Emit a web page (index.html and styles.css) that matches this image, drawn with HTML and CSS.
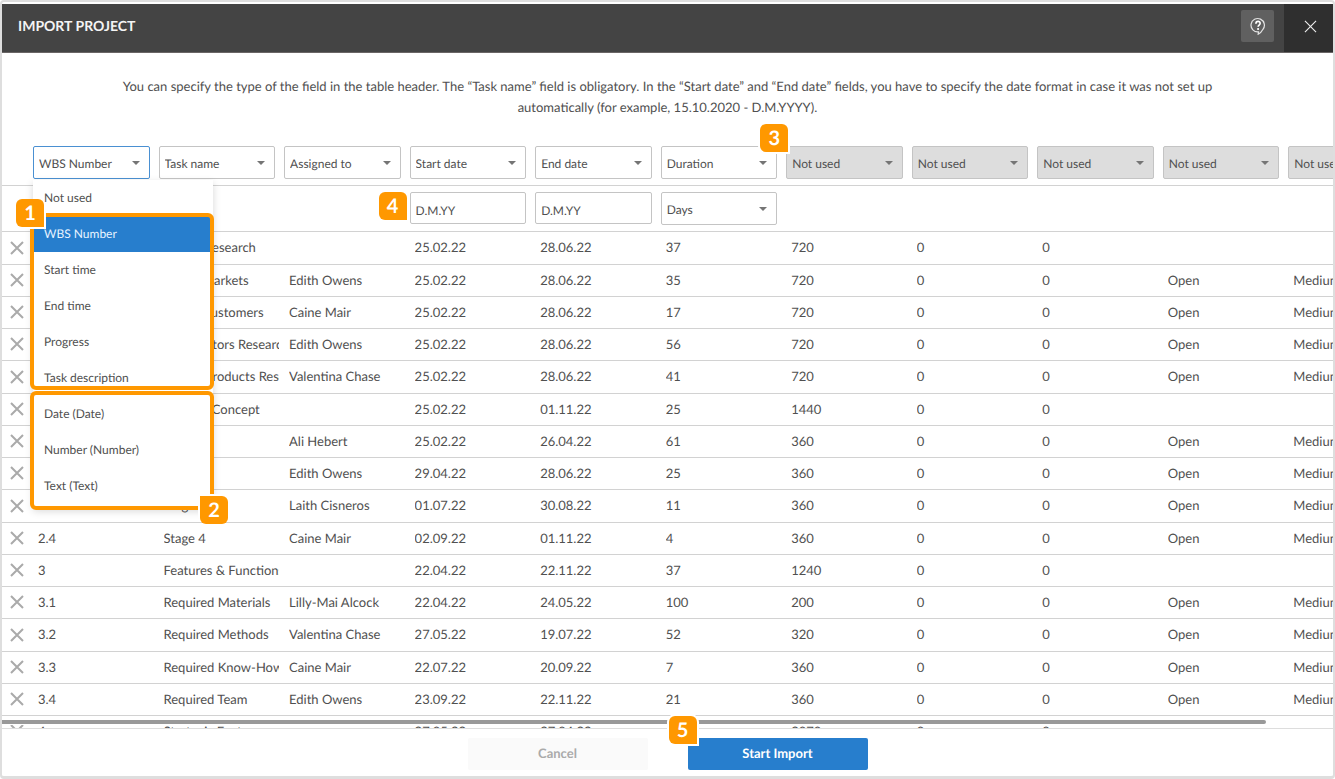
FILE: index.html
```
<!DOCTYPE html>
<html lang="en">
<head>
<meta charset="utf-8">
<title>Import project</title>
<link rel="stylesheet" href="styles.css">
</head>
<body>
<svg class="sprite" aria-hidden="true"><symbol id="cross" viewBox="0 0 14 14"><path d="M1 1 13 13M13 1 1 13"/></symbol></svg>
<main class="dialog">
<header class="topbar">
<h1 class="title">IMPORT PROJECT</h1>
<button class="help" type="button" aria-label="Help"><svg width="18" height="18" viewBox="0 0 18 18"><path d="M9.500 14.900A6.700 6.700 0 1 1 13.800 12.600C12.800 14.600 11.500 16.200 9.200 17.200Z" fill="none" stroke="#e2e2e2" stroke-width="1.2"/><path d="M6.900 6.700C7 3.700 11.300 3.800 11.100 6.500C11 8.100 9.100 8.100 9.100 9.800" fill="none" stroke="#fff" stroke-width="1.700"/><circle cx="9.100" cy="12" r="1.100" fill="#fff"/></svg></button>
<button class="close" type="button" aria-label="Close"><svg width="13" height="13"><use href="#cross"/></svg></button>
</header>
<p class="intro">You can specify the type of the field in the table header. The “Task name” field is obligatory. In the “Start date” and “End date” fields, you have to specify the date format in case it was not set up automatically (for example, 15.10.2020 - D.M.YYYY).</p>
<section class="preview">
<div class="scroller">
<table class="grid">
<colgroup><col class="col-remove"><col><col><col><col><col><col><col><col><col><col><col></colgroup>
<thead>
<tr>
<td></td>
<th><div class="field field-open"><select class="control" aria-label="Column 1"><option>WBS Number</option></select>
<div class="menu">
<ul class="options" role="listbox" aria-label="Field type">
<li class="option" role="option">Not used</li>
<li class="option option-active" role="option" aria-selected="true">WBS Number</li>
<li class="option" role="option">Start time</li>
<li class="option" role="option">End time</li>
<li class="option" role="option">Progress</li>
<li class="option" role="option">Task description</li>
<li class="option" role="option">Date (Date)</li>
<li class="option" role="option">Number (Number)</li>
<li class="option" role="option">Text (Text)</li>
</ul>
<div class="frame frame-standard"><span class="badge badge-1">1</span></div>
<div class="frame frame-custom"><span class="badge badge-2">2</span></div>
</div></div></th>
<th><div class="field"><select class="control" aria-label="Column 2"><option>Task name</option></select></div></th>
<th><div class="field"><select class="control" aria-label="Column 3"><option>Assigned to</option></select></div></th>
<th><div class="field"><select class="control" aria-label="Column 4"><option>Start date</option></select></div></th>
<th><div class="field"><select class="control" aria-label="Column 5"><option>End date</option></select></div></th>
<th><div class="field field-marked"><select class="control" aria-label="Column 6"><option>Duration</option></select><span class="badge badge-3">3</span></div></th>
<th><div class="field"><select class="control control-unused" aria-label="Column 7"><option>Not used</option></select></div></th>
<th><div class="field"><select class="control control-unused" aria-label="Column 8"><option>Not used</option></select></div></th>
<th><div class="field"><select class="control control-unused" aria-label="Column 9"><option>Not used</option></select></div></th>
<th><div class="field"><select class="control control-unused" aria-label="Column 10"><option>Not used</option></select></div></th>
<th><div class="field"><select class="control control-unused" aria-label="Column 11"><option>Not used</option></select></div></th>
</tr>
<tr>
<td></td><td></td><td></td><td></td>
<td><div class="format"><input class="control control-text" type="text" value="D.M.YY" aria-label="Start date format"><span class="badge badge-4">4</span></div></td>
<td><div class="format"><input class="control control-text" type="text" value="D.M.YY" aria-label="End date format"></div></td>
<td><div class="field"><select class="control" aria-label="Duration unit"><option>Days</option></select></div></td>
<td></td><td></td><td></td><td></td><td></td>
</tr>
</thead>
<tbody>
<tr><td><button class="remove" type="button" aria-label="Remove row"><svg width="14" height="14"><use href="#cross"/></svg></button></td><td></td><td><div>Market research</div></td><td></td><td><div>25.02.22</div></td><td><div>28.06.22</div></td><td><div>37</div></td><td><div>720</div></td><td><div>0</div></td><td><div>0</div></td><td></td><td></td></tr>
<tr><td><button class="remove" type="button" aria-label="Remove row"><svg width="14" height="14"><use href="#cross"/></svg></button></td><td></td><td><div>Target Markets</div></td><td><div>Edith Owens</div></td><td><div>25.02.22</div></td><td><div>28.06.22</div></td><td><div>35</div></td><td><div>720</div></td><td><div>0</div></td><td><div>0</div></td><td><div>Open</div></td><td><div>Medium</div></td></tr>
<tr><td><button class="remove" type="button" aria-label="Remove row"><svg width="14" height="14"><use href="#cross"/></svg></button></td><td></td><td><div>Target Customers</div></td><td><div>Caine Mair</div></td><td><div>25.02.22</div></td><td><div>28.06.22</div></td><td><div>17</div></td><td><div>720</div></td><td><div>0</div></td><td><div>0</div></td><td><div>Open</div></td><td><div>Medium</div></td></tr>
<tr><td><button class="remove" type="button" aria-label="Remove row"><svg width="14" height="14"><use href="#cross"/></svg></button></td><td></td><td><div>Competitors Research</div></td><td><div>Edith Owens</div></td><td><div>25.02.22</div></td><td><div>28.06.22</div></td><td><div>56</div></td><td><div>720</div></td><td><div>0</div></td><td><div>0</div></td><td><div>Open</div></td><td><div>Medium</div></td></tr>
<tr><td><button class="remove" type="button" aria-label="Remove row"><svg width="14" height="14"><use href="#cross"/></svg></button></td><td></td><td><div>Similar Products Research</div></td><td><div>Valentina Chase</div></td><td><div>25.02.22</div></td><td><div>28.06.22</div></td><td><div>41</div></td><td><div>720</div></td><td><div>0</div></td><td><div>0</div></td><td><div>Open</div></td><td><div>Medium</div></td></tr>
<tr><td><button class="remove" type="button" aria-label="Remove row"><svg width="14" height="14"><use href="#cross"/></svg></button></td><td></td><td><div>Product Concept</div></td><td></td><td><div>25.02.22</div></td><td><div>01.11.22</div></td><td><div>25</div></td><td><div>1440</div></td><td><div>0</div></td><td><div>0</div></td><td></td><td></td></tr>
<tr><td><button class="remove" type="button" aria-label="Remove row"><svg width="14" height="14"><use href="#cross"/></svg></button></td><td></td><td></td><td><div>Ali Hebert</div></td><td><div>25.02.22</div></td><td><div>26.04.22</div></td><td><div>61</div></td><td><div>360</div></td><td><div>0</div></td><td><div>0</div></td><td><div>Open</div></td><td><div>Medium</div></td></tr>
<tr><td><button class="remove" type="button" aria-label="Remove row"><svg width="14" height="14"><use href="#cross"/></svg></button></td><td></td><td></td><td><div>Edith Owens</div></td><td><div>29.04.22</div></td><td><div>28.06.22</div></td><td><div>25</div></td><td><div>360</div></td><td><div>0</div></td><td><div>0</div></td><td><div>Open</div></td><td><div>Medium</div></td></tr>
<tr><td><button class="remove" type="button" aria-label="Remove row"><svg width="14" height="14"><use href="#cross"/></svg></button></td><td></td><td><div>Stage 3</div></td><td><div>Laith Cisneros</div></td><td><div>01.07.22</div></td><td><div>30.08.22</div></td><td><div>11</div></td><td><div>360</div></td><td><div>0</div></td><td><div>0</div></td><td><div>Open</div></td><td><div>Medium</div></td></tr>
<tr><td><button class="remove" type="button" aria-label="Remove row"><svg width="14" height="14"><use href="#cross"/></svg></button></td><td><div>2.4</div></td><td><div>Stage 4</div></td><td><div>Caine Mair</div></td><td><div>02.09.22</div></td><td><div>01.11.22</div></td><td><div>4</div></td><td><div>360</div></td><td><div>0</div></td><td><div>0</div></td><td><div>Open</div></td><td><div>Medium</div></td></tr>
<tr><td><button class="remove" type="button" aria-label="Remove row"><svg width="14" height="14"><use href="#cross"/></svg></button></td><td><div>3</div></td><td><div>Features &amp; Functions</div></td><td></td><td><div>22.04.22</div></td><td><div>22.11.22</div></td><td><div>37</div></td><td><div>1240</div></td><td><div>0</div></td><td><div>0</div></td><td></td><td></td></tr>
<tr><td><button class="remove" type="button" aria-label="Remove row"><svg width="14" height="14"><use href="#cross"/></svg></button></td><td><div>3.1</div></td><td><div>Required Materials</div></td><td><div>Lilly-Mai Alcock</div></td><td><div>22.04.22</div></td><td><div>24.05.22</div></td><td><div>100</div></td><td><div>200</div></td><td><div>0</div></td><td><div>0</div></td><td><div>Open</div></td><td><div>Medium</div></td></tr>
<tr><td><button class="remove" type="button" aria-label="Remove row"><svg width="14" height="14"><use href="#cross"/></svg></button></td><td><div>3.2</div></td><td><div>Required Methods</div></td><td><div>Valentina Chase</div></td><td><div>27.05.22</div></td><td><div>19.07.22</div></td><td><div>52</div></td><td><div>320</div></td><td><div>0</div></td><td><div>0</div></td><td><div>Open</div></td><td><div>Medium</div></td></tr>
<tr><td><button class="remove" type="button" aria-label="Remove row"><svg width="14" height="14"><use href="#cross"/></svg></button></td><td><div>3.3</div></td><td><div>Required Know-How</div></td><td><div>Caine Mair</div></td><td><div>22.07.22</div></td><td><div>20.09.22</div></td><td><div>7</div></td><td><div>360</div></td><td><div>0</div></td><td><div>0</div></td><td><div>Open</div></td><td><div>Medium</div></td></tr>
<tr><td><button class="remove" type="button" aria-label="Remove row"><svg width="14" height="14"><use href="#cross"/></svg></button></td><td><div>3.4</div></td><td><div>Required Team</div></td><td><div>Edith Owens</div></td><td><div>23.09.22</div></td><td><div>22.11.22</div></td><td><div>21</div></td><td><div>360</div></td><td><div>0</div></td><td><div>0</div></td><td><div>Open</div></td><td><div>Medium</div></td></tr>
<tr><td><button class="remove" type="button" aria-label="Remove row"><svg width="14" height="14"><use href="#cross"/></svg></button></td><td><div>4</div></td><td><div>Strategic Feat</div></td><td></td><td><div>27.05.22</div></td><td><div>27.04.23</div></td><td></td><td><div>2070</div></td><td><div>0</div></td><td><div>0</div></td><td></td><td></td></tr>
</tbody>
</table>
</div>
<div class="track"><div class="thumb"></div></div>
</section>
<footer class="actions">
<button class="action action-cancel" type="button">Cancel</button>
<div class="submit"><button class="action action-start" type="button">Start Import</button><span class="badge badge-5">5</span></div>
</footer>
</main>
</body>
</html>
```
FILE: styles.css
```
* { box-sizing: border-box; }
body { margin: 0; background: #fff; color: #505050; font-family: Lato, "Liberation Sans", sans-serif; font-size: 13px; line-height: 21px; text-rendering: geometricPrecision; }
button, input, select { font: inherit; color: inherit; margin: 0; text-rendering: inherit; }
button { border: 0; padding: 0; display: flex; align-items: center; justify-content: center; }
.sprite { display: none; }
svg { display: block; }

.dialog { display: flex; flex-direction: column; height: 100vh; border: 2px solid #dedede; border-bottom-width: 3px; border-radius: 4px; padding-top: 2px; overflow: hidden; }

.topbar { display: flex; flex: none; align-items: center; height: 49px; background: #444; border-bottom: 1px solid #6a6666; }
.title { flex: 1; margin: 0; padding: 0 16px 6px; color: #f4f4f4; font-size: 14px; font-weight: 700; }
.help { width: 33px; height: 32px; margin: 0 10px 4px 0; border-radius: 2px; background: #606060; }
.close { width: 49px; height: 48px; padding: 0 0 4px 4px; background: #2f2f2f; stroke: #eee; stroke-width: 1.2; }

.intro { flex: none; width: 83%; margin: 0 auto; padding-top: 23px; text-align: center; }

.preview { position: relative; flex: 1; min-height: 0; border-bottom: 1px solid #ddd; }
.scroller { height: 100%; overflow: hidden; padding-top: 28px; }
.grid { width: 1412px; table-layout: fixed; border-collapse: separate; border-spacing: 0; }
.col-remove { width: 31px; }
.grid td, .grid th { padding: 0; border-bottom: 1px solid #d2d2d2; font-weight: 400; text-align: left; }
.grid thead td, .grid thead th { padding: 0 9px 6px 0; vertical-align: top; }
.grid thead tr + tr td { padding-top: 6px; }
.grid tbody tr { height: 32px; }
.grid tbody tr:nth-child(4n+1) { height: 33px; }
.grid tbody td { padding-bottom: 1px; }
.grid tbody div { margin: 0 5px; overflow: hidden; white-space: nowrap; }
.remove { width: 30px; height: 21px; background: none; stroke: #aaa; stroke-width: 2; }

.field, .format { position: relative; height: 33px; font-size: 12px; }
.field::after { content: ""; position: absolute; right: 10px; top: 15px; border: 4px solid transparent; border-top-color: #757575; border-bottom: 0; pointer-events: none; }
.field-open { z-index: 2; }
.field-marked { z-index: 1; }
.control { display: block; width: 100%; height: 33px; padding: 2px 20px 0 5px; border: 1px solid #c4c4c4; border-radius: 2px; background: #fff; appearance: none; outline: 0; }
.control-text { height: 32px; padding-top: 5px; }
.control-unused { background: #ddd; }
.field-open .control { border-color: #4a90d2; }

.menu { position: absolute; left: 0; top: 34px; width: 180px; background: #fff; box-shadow: 0 3px 8px rgba(0, 0, 0, .16); }
.options { margin: 0; padding: 0 0 4px; list-style: none; }
.option { height: 36px; padding: 0 11px; line-height: 36px; }
.option-active { background: #277ecd; color: #e8f3ff; }
.frame { position: absolute; left: -3px; right: -1px; border: 4px solid #ff9800; border-radius: 6px; }
.frame-standard { top: 33px; height: 177px; }
.frame-custom { top: 211px; height: 119px; }

.badge { position: absolute; z-index: 3; width: 28px; height: 28px; border-radius: 6px; background: #ff9800; color: #fff; font-size: 20px; font-weight: 700; line-height: 29px; text-align: center; }
.badge-1 { left: -18px; top: -18px; border-bottom-right-radius: 0; box-shadow: 2px 2px #fff; }
.badge-2 { right: -18px; bottom: -18px; border-top-left-radius: 0; box-shadow: -2px -2px #fff; }
.badge-3 { right: -11px; top: -22px; border-bottom-right-radius: 0; box-shadow: 0 0 0 2px #fff; }
.badge-4 { left: -31px; top: 0; border-bottom-right-radius: 0; }
.badge-5 { left: -19px; top: -22px; border-bottom-right-radius: 0; box-shadow: 0 0 0 2px #fff; }

.track { position: absolute; left: 0; right: 0; bottom: 3px; height: 6px; background: #fff; }
.thumb { width: 95%; height: 4px; margin-top: 1px; border-radius: 0 2px 2px 0; background: #999; }

.actions { display: flex; flex: none; justify-content: center; gap: 40px; height: 47px; padding-top: 9px; }
.submit { position: relative; }
.action { width: 180px; height: 32px; border-radius: 2px; font-weight: 700; padding-bottom: 1px; }
.action-cancel { background: #fafafa; color: #aaa; }
.action-start { background: #277ecd; color: #fff; }
```
